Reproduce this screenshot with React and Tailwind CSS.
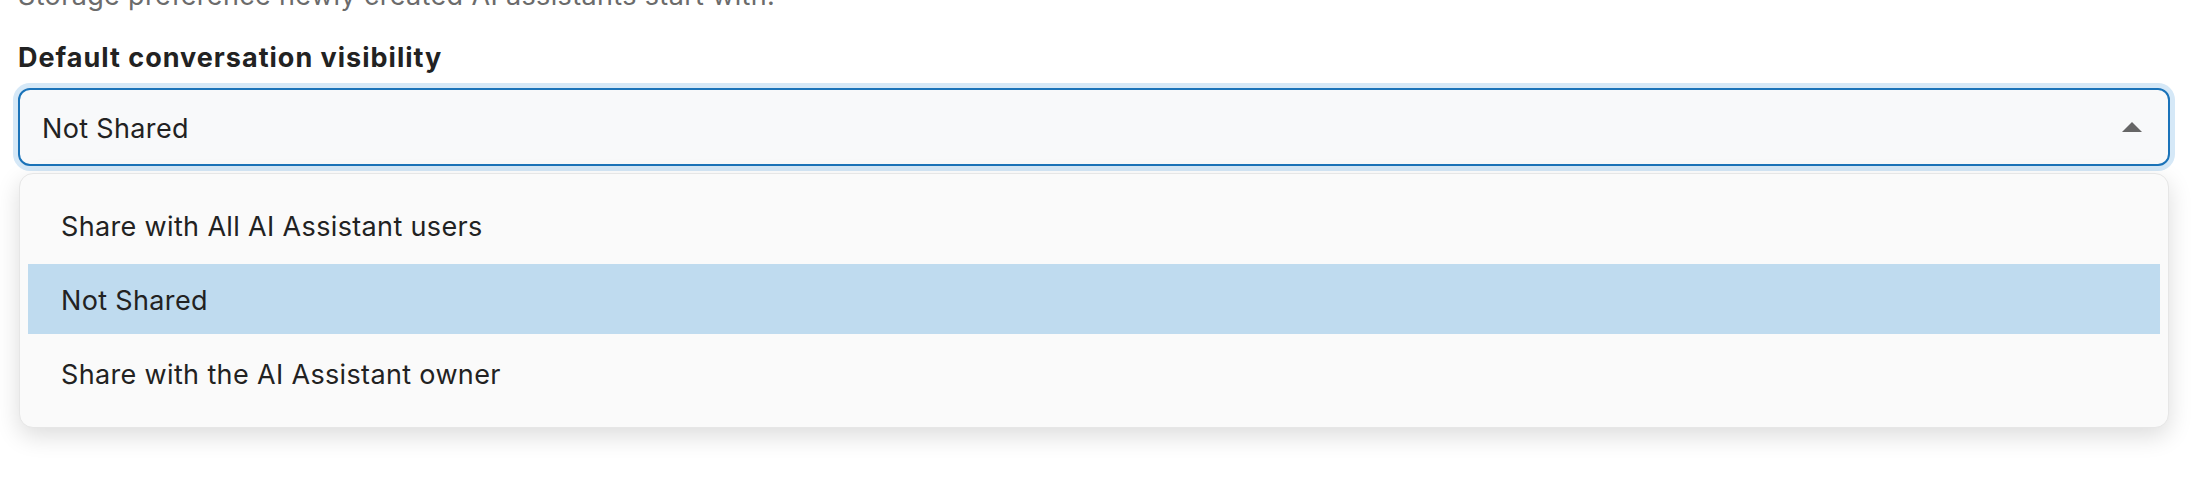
const options = [
  { id: "all", label: "Share with All AI Assistant users" },
  { id: "none", label: "Not Shared" },
  { id: "owner", label: "Share with the AI Assistant owner" },
];

function Caret() {
  return (
    <svg width="20" height="10" viewBox="0 0 20 10" className="shrink-0">
      <polygon points="10,0 20,10 0,10" fill="#666666" />
    </svg>
  );
}

export default function App() {
  const selected = "none";
  return (
    <div
      className="h-[480px] w-full overflow-hidden bg-white text-[#222222]"
      style={{ fontFamily: "Inter, 'Noto Sans', sans-serif" }}
    >
      <div className="w-[2170px] pl-[18px]">
        <p className="mt-[-22px] text-[27px] leading-[36px] tracking-[0.35px] text-[#6b6b6b]">
          Storage preference newly created AI assistants start with.
        </p>
        <label className="mt-[26px] block text-[27px] font-bold leading-[36px] tracking-[1px]">
          Default conversation visibility
        </label>
        <button className="mt-[12px] flex h-[78px] w-full items-center justify-between rounded-[12px] border-2 border-[#1a73b9] bg-[#f8f9fa] pl-[22px] pr-[26px] text-left shadow-[0_0_0_5px_#d5e8f7]">
          <span className="pt-[3px] text-[27px] leading-[36px] tracking-[0.35px]">Not Shared</span>
          <Caret />
        </button>
        <ul className="mx-[1px] mt-[7px] flex flex-col gap-[4px] rounded-[14px] border border-[#e6e6e6] bg-[#fafafa] px-[8px] pb-[19px] pt-[16px] shadow-[0_8px_24px_rgba(0,0,0,0.14)]">
          {options.map((o) => (
            <li
              key={o.id}
              className={`flex h-[70px] items-center pl-[33px] pt-[3px] text-[27px] leading-[36px] tracking-[0.35px] ${
                o.id === selected ? "bg-[#bfdbef]" : ""
              }`}
            >
              {o.label}
            </li>
          ))}
        </ul>
      </div>
    </div>
  );
}
